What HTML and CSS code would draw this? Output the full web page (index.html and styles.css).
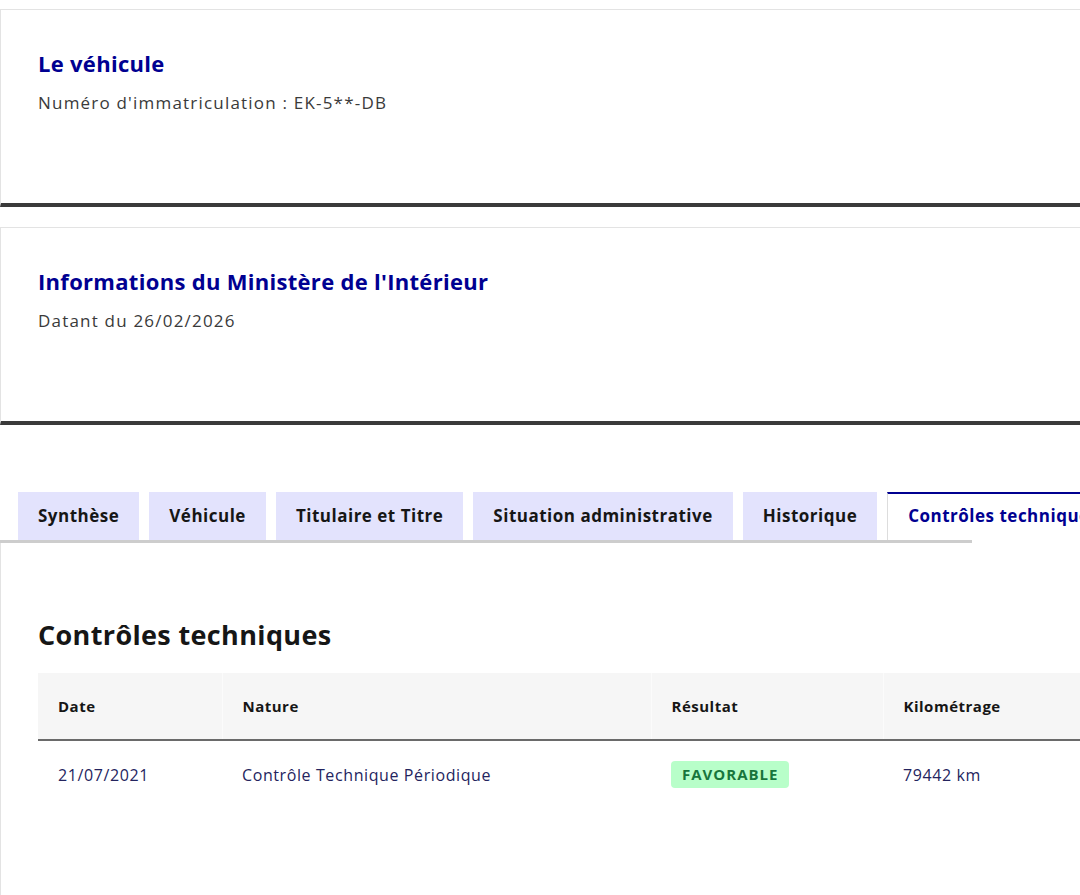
FILE: index.html
```html
<!DOCTYPE html>
<html lang="fr">
<head>
    <meta charset="UTF-8">
    <meta name="viewport" content="width=device-width, initial-scale=1.0">
    <title>Historique du véhicule - Contrôles techniques</title>
    <link rel="stylesheet" href="styles.css">
</head>
<body>
    <div class="page">
        <div class="card">
            <h2 class="card-title">Le véhicule</h2>
            <p class="card-text">Numéro d'immatriculation : EK-5**-DB</p>
        </div>

        <div class="card">
            <h2 class="card-title">Informations du Ministère de l'Intérieur</h2>
            <p class="card-text">Datant du 26/02/2026</p>
        </div>

        <div class="tabs">
            <ul class="tab-list">
                <li class="tab">Synthèse</li>
                <li class="tab">Véhicule</li>
                <li class="tab">Titulaire et Titre</li>
                <li class="tab">Situation administrative</li>
                <li class="tab">Historique</li>
                <li class="tab active">Contrôles techniques</li>
            </ul>

            <div class="panel">
                <h3 class="panel-title">Contrôles techniques</h3>
                <table class="ct-table">
                    <colgroup>
                        <col class="col-date">
                        <col class="col-nature">
                        <col class="col-result">
                        <col class="col-km">
                    </colgroup>
                    <thead>
                        <tr>
                            <th>Date</th>
                            <th>Nature</th>
                            <th>Résultat</th>
                            <th>Kilométrage</th>
                        </tr>
                    </thead>
                    <tbody>
                        <tr>
                            <td>21/07/2021</td>
                            <td>Contrôle Technique Périodique</td>
                            <td><span class="badge">Favorable</span></td>
                            <td>79442 km</td>
                        </tr>
                    </tbody>
                </table>
            </div>
        </div>
    </div>
</body>
</html>
```

FILE: styles.css
```css
body {
    margin: 0;
    padding: 0;
    font-family: "Open Sans", "Noto Sans", Arial, sans-serif;
    color: #161616;
    background: #fff;
    overflow: hidden;
}
.page {
    width: 1200px;
    padding-top: 9px;
}
.card {
    border: 1px solid #e3e3e3;
    border-bottom: 4px solid #3a3a3a;
    padding: 39px 37px 88px;
    margin-bottom: 20px;
}
.card-title {
    margin: 0;
    font-size: 22px;
    line-height: 28px;
    font-weight: 700;
    letter-spacing: 0.3px;
    color: #000091;
}
.card-text {
    margin: 14px 0 0;
    font-size: 17px;
    line-height: 24px;
    letter-spacing: 1.2px;
    color: #3a3a3a;
}
.tabs {
    margin-top: 67px;
}
.tab-list {
    list-style: none;
    margin: 0;
    padding: 0 0 0 18px;
    display: flex;
    gap: 10px;
    width: 972px;
    box-sizing: border-box;
    border-bottom: 3px solid #cdcdcd;
}
.tab {
    flex-shrink: 0;
    height: 48px;
    line-height: 48px;
    padding: 0 20px;
    background: #e3e3fd;
    font-size: 17px;
    font-weight: 700;
    letter-spacing: 0.5px;
    color: #161616;
    box-sizing: border-box;
}
.tab.active {
    background: #fff;
    color: #000091;
    border-top: 2px solid #000091;
    border-left: 1px solid #dddddd;
    line-height: 44px;
}
.panel {
    border-left: 1px solid #e3e3e3;
    padding: 76px 0 200px 37px;
}
.panel-title {
    margin: 0 0 22px;
    font-size: 27px;
    line-height: 32px;
    font-weight: 700;
    letter-spacing: 0.35px;
}
.ct-table {
    width: 1120px;
    border-collapse: collapse;
    table-layout: fixed;
}
.col-date { width: 184px; }
.col-nature { width: 429px; }
.col-result { width: 232px; }
.col-km { width: 275px; }
.ct-table th {
    background: #f6f6f6;
    height: 66px;
    padding: 0 20px;
    text-align: left;
    font-size: 15px;
    font-weight: 700;
    letter-spacing: 0.5px;
    border-left: 1px solid #fbfbfb;
    border-bottom: 2px solid #6a6a6a;
}
.ct-table th:first-child {
    border-left: none;
}
.ct-table td {
    padding: 20px 20px;
    font-size: 16px;
    line-height: 24px;
    letter-spacing: 0.6px;
    color: #24245e;
}
.badge {
    display: inline-block;
    padding: 1px 11px;
    border-radius: 4px;
    background: #b8fec9;
    color: #18753c;
    font-size: 15px;
    font-weight: 700;
    line-height: 25px;
    letter-spacing: 1px;
    text-transform: uppercase;
}
```
